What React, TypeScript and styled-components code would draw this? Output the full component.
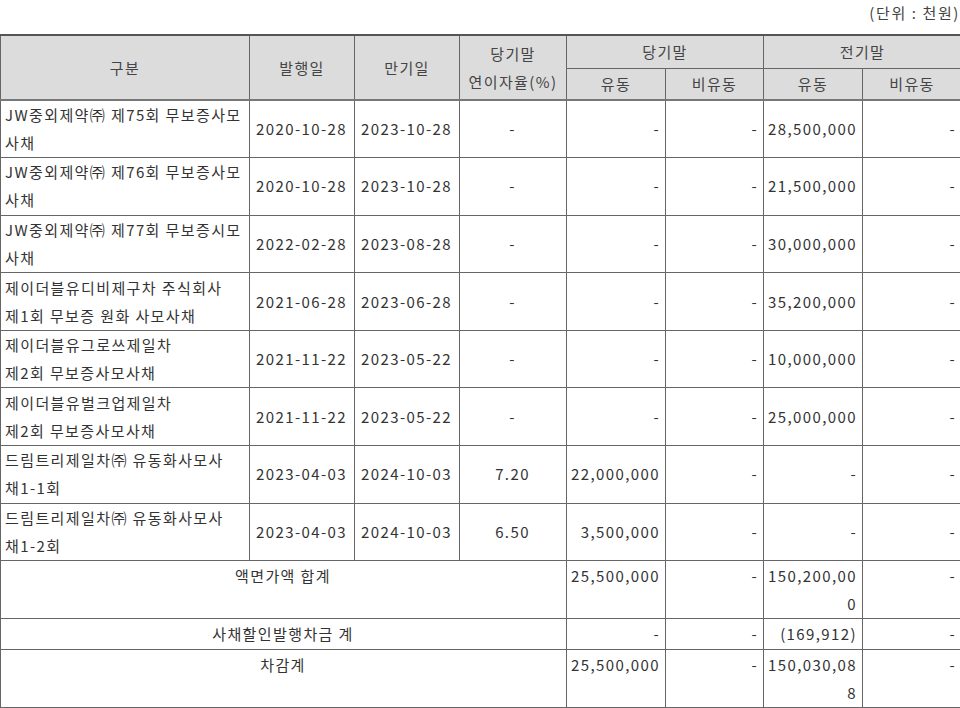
import React from 'react';
import styled, { createGlobalStyle } from 'styled-components';

const GlobalStyle = createGlobalStyle`
  html, body {
    margin: 0;
    padding: 0;
    background: #fff;
    overflow: hidden;
  }
  body {
    font-family: "Noto Sans CJK KR", "Noto Sans", sans-serif;
    color: #333;
  }
`;

interface Bond {
  name: string[];
  issued: string;
  maturity: string;
  rate: string;
  curCurrent: string;
  curNon: string;
  prevCurrent: string;
  prevNon: string;
}

const bonds: Bond[] = [
  { name: ['JW중외제약㈜ 제75회 무보증사모', '사채'], issued: '2020-10-28', maturity: '2023-10-28', rate: '-', curCurrent: '-', curNon: '-', prevCurrent: '28,500,000', prevNon: '-' },
  { name: ['JW중외제약㈜ 제76회 무보증사모', '사채'], issued: '2020-10-28', maturity: '2023-10-28', rate: '-', curCurrent: '-', curNon: '-', prevCurrent: '21,500,000', prevNon: '-' },
  { name: ['JW중외제약㈜ 제77회 무보증시모', '사채'], issued: '2022-02-28', maturity: '2023-08-28', rate: '-', curCurrent: '-', curNon: '-', prevCurrent: '30,000,000', prevNon: '-' },
  { name: ['제이더블유디비제구차 주식회사', '제1회 무보증 원화 사모사채'], issued: '2021-06-28', maturity: '2023-06-28', rate: '-', curCurrent: '-', curNon: '-', prevCurrent: '35,200,000', prevNon: '-' },
  { name: ['제이더블유그로쓰제일차', '제2회 무보증사모사채'], issued: '2021-11-22', maturity: '2023-05-22', rate: '-', curCurrent: '-', curNon: '-', prevCurrent: '10,000,000', prevNon: '-' },
  { name: ['제이더블유벌크업제일차', '제2회 무보증사모사채'], issued: '2021-11-22', maturity: '2023-05-22', rate: '-', curCurrent: '-', curNon: '-', prevCurrent: '25,000,000', prevNon: '-' },
  { name: ['드림트리제일차㈜ 유동화사모사', '채1-1회'], issued: '2023-04-03', maturity: '2024-10-03', rate: '7.20', curCurrent: '22,000,000', curNon: '-', prevCurrent: '-', prevNon: '-' },
  { name: ['드림트리제일차㈜ 유동화사모사', '채1-2회'], issued: '2023-04-03', maturity: '2024-10-03', rate: '6.50', curCurrent: '3,500,000', curNon: '-', prevCurrent: '-', prevNon: '-' },
];

interface Summary {
  label: string;
  cells: string[][];
  height: number;
}

const summaries: Summary[] = [
  { label: '액면가액 합계', cells: [['25,500,000'], ['-'], ['150,200,00', '0'], ['-']], height: 58 },
  { label: '사채할인발행차금 계', cells: [['-'], ['-'], ['(169,912)'], ['-']], height: 31 },
  { label: '차감계', cells: [['25,500,000'], ['-'], ['150,030,08', '8'], ['-']], height: 58 },
];

const colWidths = [249, 105, 105, 107, 99, 98, 99, 99];

const Lines: React.FC<{ lines: string[] }> = ({ lines }) => (
  <>
    {lines.map((l, i) => (
      <React.Fragment key={i}>
        {i > 0 && <br />}
        {l}
      </React.Fragment>
    ))}
  </>
);

const App: React.FC = () => {
  return (
    <Page>
      <GlobalStyle />
      <Unit>(단위 : 천원)</Unit>
      <Table>
        <colgroup>
          {colWidths.map((w, i) => (
            <col key={i} style={{ width: w }} />
          ))}
        </colgroup>
        <thead>
          <HeadRow $h={33}>
            <Th rowSpan={2}>구분</Th>
            <Th rowSpan={2}>발행일</Th>
            <Th rowSpan={2}>만기일</Th>
            <Th rowSpan={2}>
              당기말
              <br />
              연이자율(%)
            </Th>
            <Th colSpan={2}>당기말</Th>
            <Th colSpan={2}>전기말</Th>
          </HeadRow>
          <HeadRow $h={32}>
            <Th>유동</Th>
            <Th>비유동</Th>
            <Th>유동</Th>
            <Th>비유동</Th>
          </HeadRow>
        </thead>
        <tbody>
          {bonds.map((b, i) => (
            <BodyRow key={i} $h={57.6}>
              <Td $align="left">
                <Lines lines={b.name} />
              </Td>
              <Td $align="center">{b.issued}</Td>
              <Td $align="center">{b.maturity}</Td>
              <Td $align="center">{b.rate}</Td>
              <Td $align="right">{b.curCurrent}</Td>
              <Td $align="right">{b.curNon}</Td>
              <Td $align="right">{b.prevCurrent}</Td>
              <Td $align="right">{b.prevNon}</Td>
            </BodyRow>
          ))}
          {summaries.map((s, i) => (
            <BodyRow key={`s${i}`} $h={s.height}>
              <Td colSpan={4} $align="center" $top>
                {s.label}
              </Td>
              {s.cells.map((c, j) => (
                <Td key={j} $align="right" $top>
                  <Lines lines={c} />
                </Td>
              ))}
            </BodyRow>
          ))}
        </tbody>
      </Table>
    </Page>
  );
};

const Page = styled.div`
  width: 960px;
  padding-top: 3px;
`;

const Unit = styled.div`
  text-align: right;
  font-size: 15px;
  line-height: 20px;
  letter-spacing: 1.6px;
  color: #444;
  height: 31px;
`;

const Table = styled.table`
  width: 961px;
  table-layout: fixed;
  border-collapse: collapse;
  border-top: 2px solid #555;
  font-size: 15px;
  letter-spacing: 1.4px;
`;

const HeadRow = styled.tr<{ $h: number }>`
  height: ${(p) => p.$h}px;
  &:last-child th {
    border-bottom: 2px solid #777;
  }
`;

const Th = styled.th`
  background: #dcdcdc;
  font-weight: 400;
  color: #444;
  text-align: center;
  vertical-align: middle;
  border: 1px solid #666;
  padding: 0 2px;
  line-height: 28px;
  white-space: nowrap;
  &[rowspan] {
    border-bottom: 2px solid #777;
  }
`;

const BodyRow = styled.tr<{ $h: number }>`
  height: ${(p) => p.$h}px;
`;

const Td = styled.td<{ $align: 'left' | 'center' | 'right'; $top?: boolean }>`
  border: 1px solid #666;
  text-align: ${(p) => p.$align};
  vertical-align: ${(p) => (p.$top ? 'top' : 'middle')};
  padding: ${(p) => (p.$top ? '1px 5px 0 4px' : '0 5px 0 4px')};
  line-height: 28px;
  color: #333;
  white-space: nowrap;
  overflow: hidden;
`;

export default App;
